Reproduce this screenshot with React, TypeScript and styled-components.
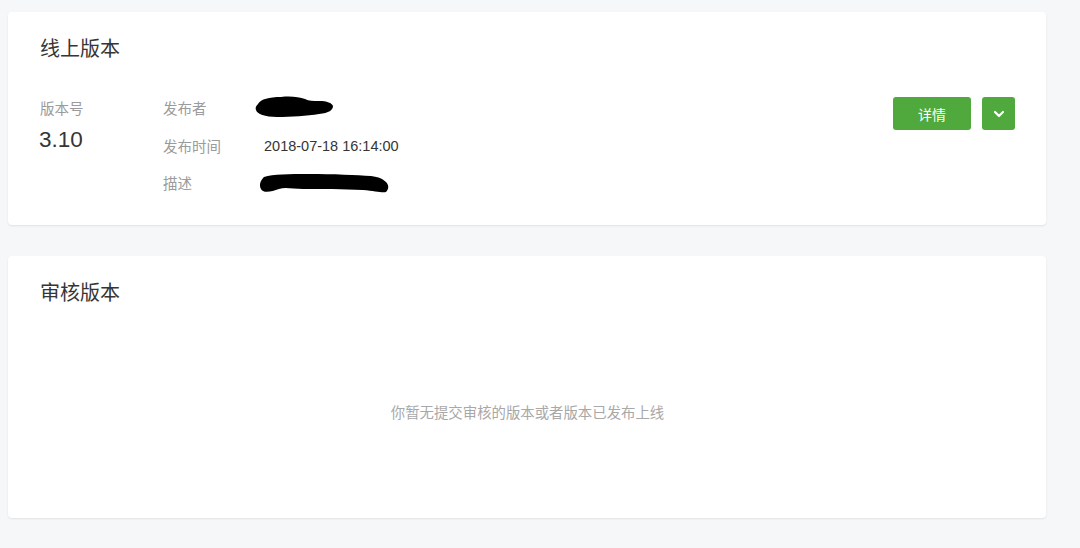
import React from 'react';
import styled, { createGlobalStyle } from 'styled-components';

const GlobalStyle = createGlobalStyle`
  html, body {
    margin: 0;
    padding: 0;
    background: #f6f7f9;
  }
  body {
    font-family: "Liberation Sans", "Noto Sans CJK SC", sans-serif;
    color: #333;
  }
`;

const Page = styled.div`
  width: 1080px;
  height: 548px;
  padding: 12px 34px 0 8px;
  box-sizing: border-box;
  display: flex;
  flex-direction: column;
  gap: 31px;
`;

const Card = styled.section<{ $height: number }>`
  background: #fff;
  border-radius: 4px;
  box-shadow: 0 1px 2px rgba(0, 0, 0, 0.09);
  height: ${(p) => p.$height}px;
  box-sizing: border-box;
  padding: 24px 31px 0 32px;
  display: flex;
  flex-direction: column;
`;

const CardTitle = styled.h2`
  margin: 0;
  font-family: "Noto Sans CJK SC", sans-serif;
  font-size: 20px;
  line-height: 24px;
  font-weight: 400;
  color: #353535;
`;

const InfoRow = styled.div`
  display: flex;
  align-items: flex-start;
  margin-top: 38px;
`;

const VersionCol = styled.div`
  width: 123px;
  display: flex;
  flex-direction: column;
`;

const Label = styled.span`
  font-family: "Noto Sans CJK SC", sans-serif;
  font-size: 14.5px;
  line-height: 20px;
  color: #9b9b9b;
`;

const VersionNum = styled.span`
  font-family: "Liberation Sans", sans-serif;
  font-size: 22.5px;
  line-height: 26px;
  margin-top: 9px;
  margin-left: -1px;
  color: #353535;
`;

const Details = styled.div`
  flex: 1;
  display: grid;
  grid-template-columns: 101px auto;
  grid-auto-rows: 20px;
  row-gap: 17.5px;
  align-items: center;
`;

const Value = styled.span`
  font-family: "Liberation Sans", sans-serif;
  font-size: 14.5px;
  line-height: 20px;
  color: #353535;
`;

const Actions = styled.div`
  display: flex;
  gap: 11px;
  margin-top: -1px;
`;

const GreenButton = styled.button<{ $width: number }>`
  width: ${(p) => p.$width}px;
  height: 33px;
  border: none;
  border-radius: 3px;
  background: #4fa93c;
  color: #fff;
  font-family: "Noto Sans CJK SC", sans-serif;
  font-size: 14px;
  padding: 0;
  display: flex;
  align-items: center;
  justify-content: center;
  cursor: pointer;
`;

const Empty = styled.div`
  flex: 1;
  display: flex;
  justify-content: center;
  padding-top: 98px;
  font-family: "Noto Sans CJK SC", sans-serif;
  font-size: 14.4px;
  line-height: 20px;
  color: #a8a8a8;
`;

// redaction marks drawn over the publisher and description values
const Scribble: React.FC<{ w: number; h: number; d: string; shift?: number; lift?: number }> = ({
  w,
  h,
  d,
  shift = 0,
  lift = 0,
}) => (
  <svg
    width={w}
    height={h}
    viewBox={`0 0 ${w} ${h}`}
    style={{ display: 'block', marginLeft: shift, marginTop: lift, overflow: 'visible' }}
  >
    <path d={d} fill="#000" />
  </svg>
);

const App: React.FC = () => (
  <>
    <GlobalStyle />
    <Page>
      <Card $height={213}>
        <CardTitle>线上版本</CardTitle>
        <InfoRow>
          <VersionCol>
            <Label>版本号</Label>
            <VersionNum>3.10</VersionNum>
          </VersionCol>
          <Details>
            <Label>发布者</Label>
            <Scribble
              w={78}
              h={21}
              shift={-9}
              lift={-3}
              d="M3 8 C6 3 14 1 26 1 C36 0 44 1 50 3 C54 5 58 5 64 5 C72 5 77 7 78 10 C78 14 74 17 64 18 C52 20 36 21 22 21 C10 21 2 18 1 14 C0 12 1 10 3 8 Z"
            />
            <Label>发布时间</Label>
            <Value>2018-07-18 16:14:00</Value>
            <Label>描述</Label>
            <Scribble
              w={130}
              h={20}
              shift={-5}
              lift={0}
              d="M5 4 C14 1 30 1 50 1 C74 1 98 2 112 3 C120 4 124 6 127 9 C130 12 130 16 127 19 C123 20 116 18 104 17 C84 16 62 16 44 16 C34 16 26 14 20 16 C14 18 8 20 4 18 C1 16 0 12 2 8 C3 6 4 5 5 4 Z"
            />
          </Details>
          <Actions>
            <GreenButton $width={78}>详情</GreenButton>
            <GreenButton $width={33}>
              <svg width="12" height="8" viewBox="0 0 12 8">
                <path d="M2 2 L6 6 L10 2" stroke="#fff" strokeWidth="2.2" fill="none" strokeLinecap="round" strokeLinejoin="round" />
              </svg>
            </GreenButton>
          </Actions>
        </InfoRow>
      </Card>
      <Card $height={262}>
        <CardTitle>审核版本</CardTitle>
        <Empty>你暂无提交审核的版本或者版本已发布上线</Empty>
      </Card>
    </Page>
  </>
);

export default App;
